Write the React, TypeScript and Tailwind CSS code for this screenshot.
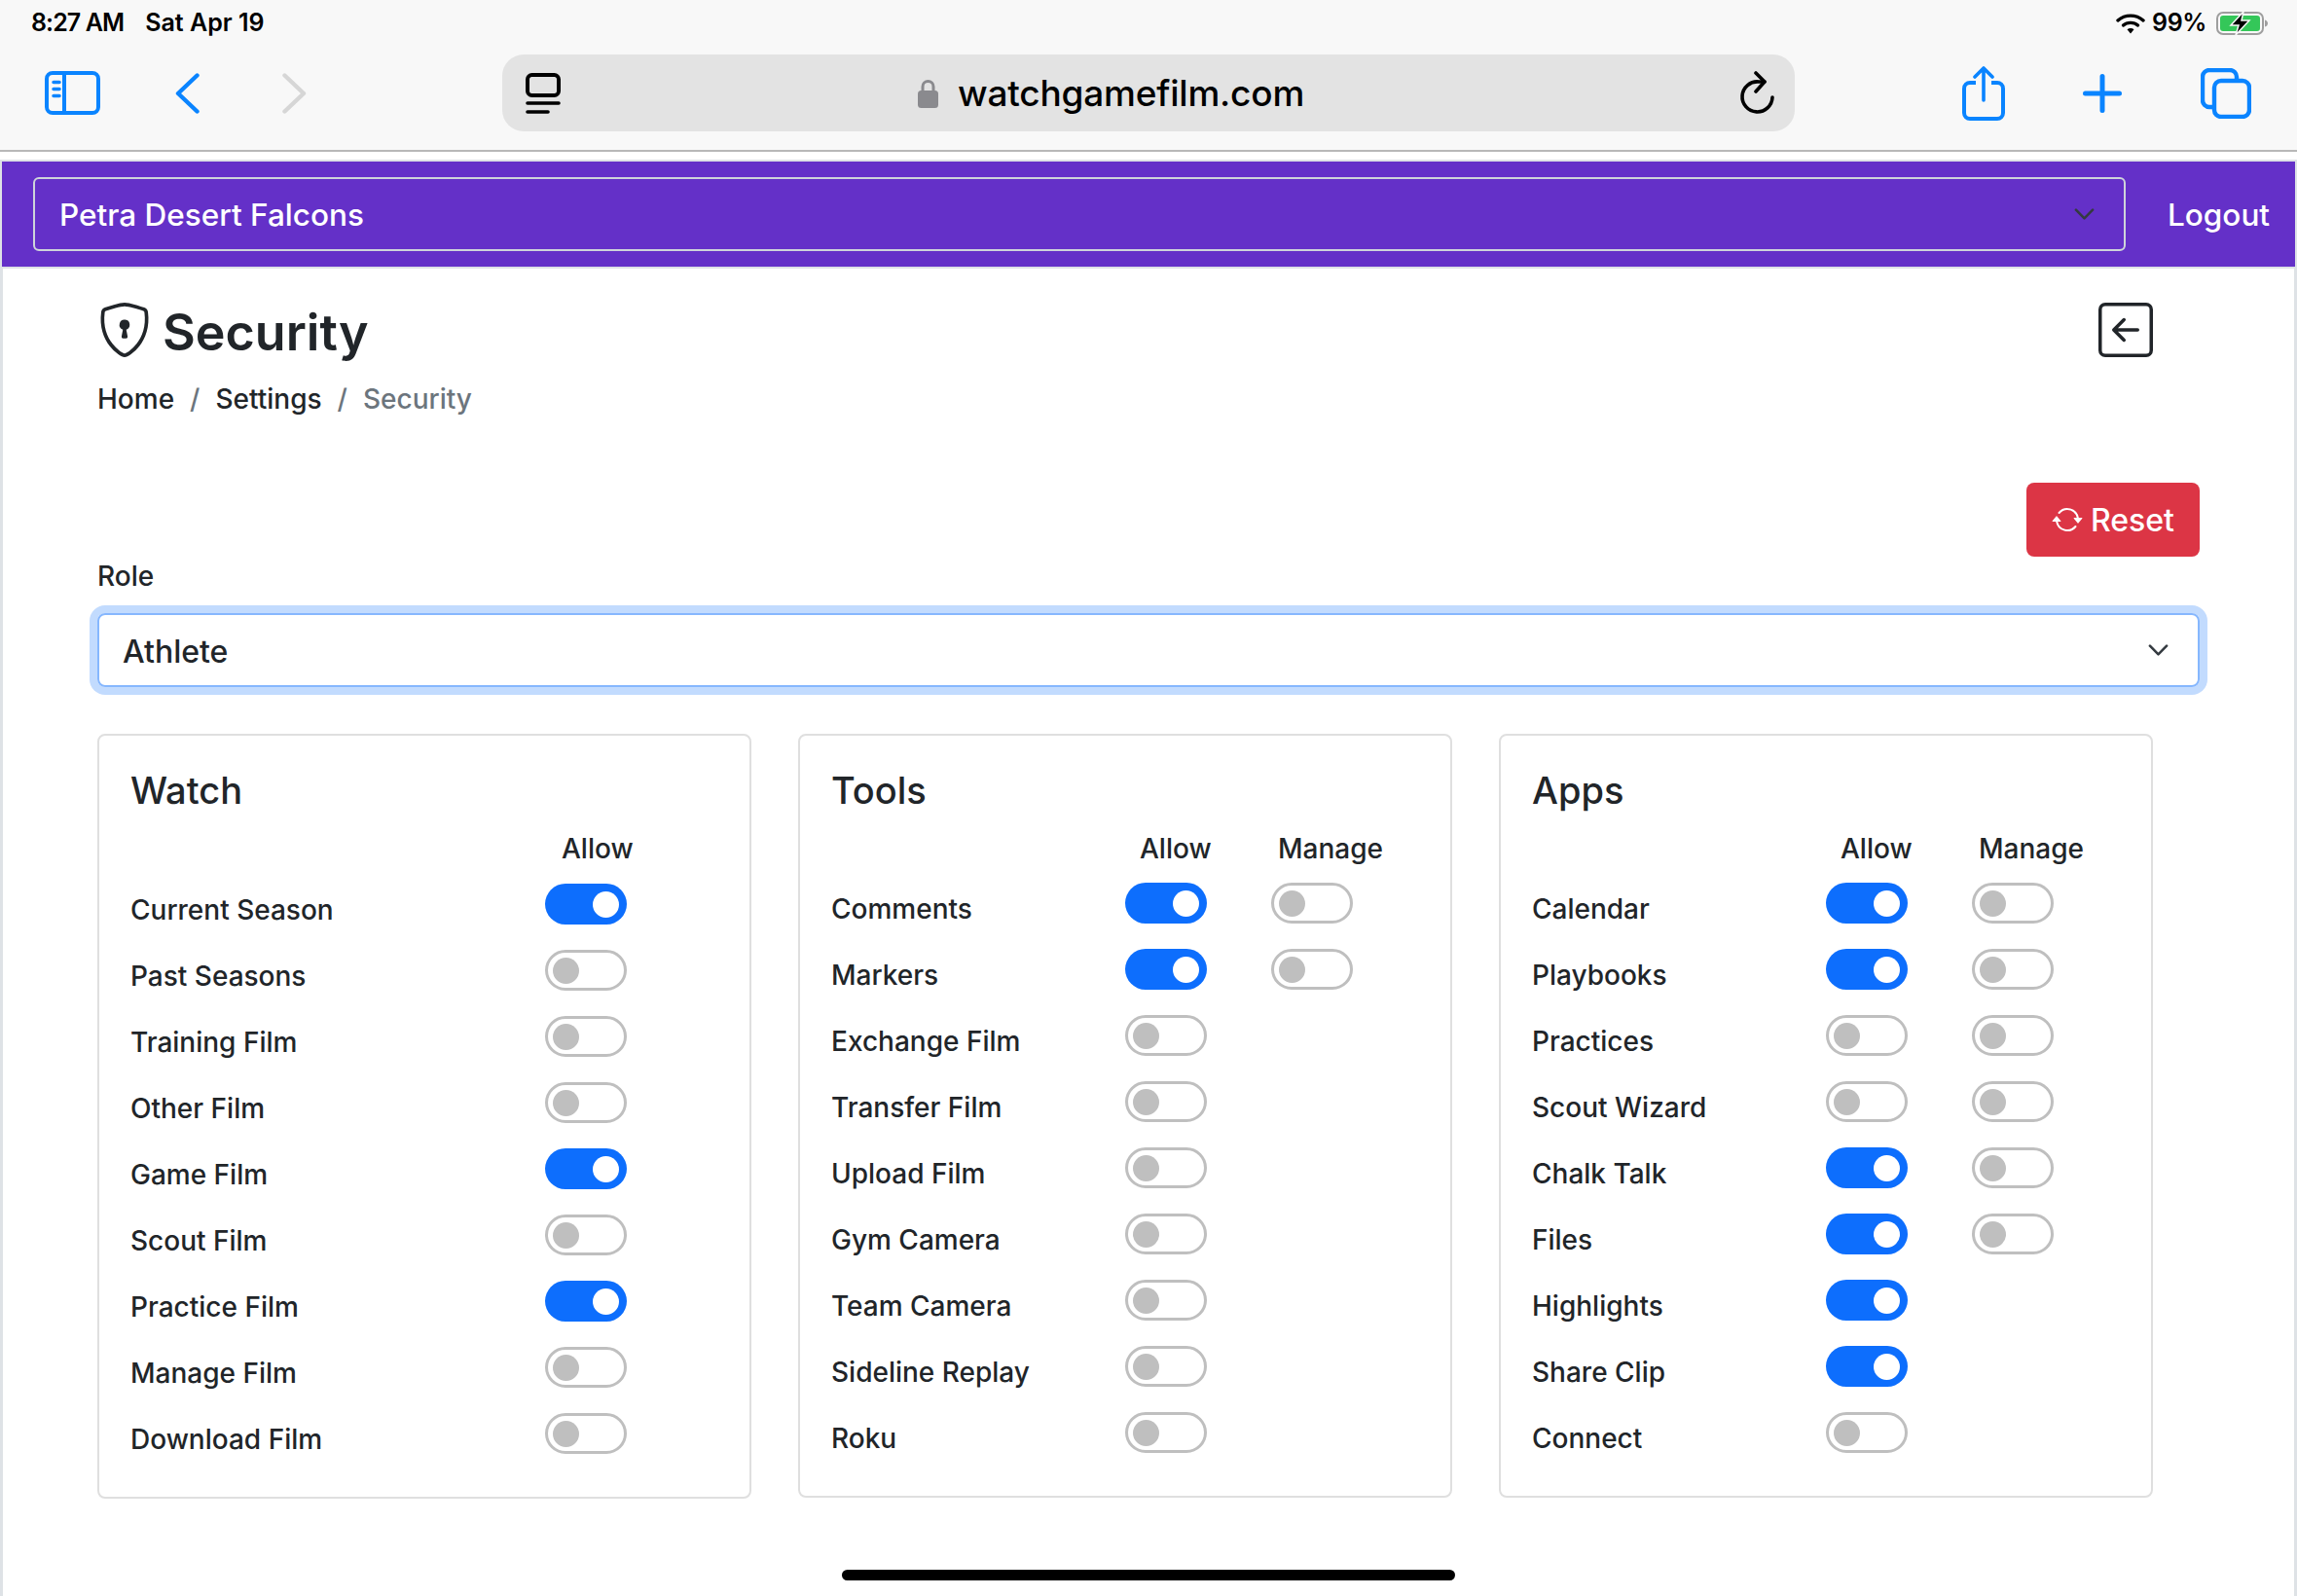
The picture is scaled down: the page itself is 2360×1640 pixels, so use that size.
import { BsArrowLeftSquare, BsArrowRepeat, BsShieldLock } from "react-icons/bs";

type Row = { label: string; allow: boolean; manage?: boolean };

const watch: Row[] = [
  { label: "Current Season", allow: true },
  { label: "Past Seasons", allow: false },
  { label: "Training Film", allow: false },
  { label: "Other Film", allow: false },
  { label: "Game Film", allow: true },
  { label: "Scout Film", allow: false },
  { label: "Practice Film", allow: true },
  { label: "Manage Film", allow: false },
  { label: "Download Film", allow: false },
];

const tools: Row[] = [
  { label: "Comments", allow: true, manage: false },
  { label: "Markers", allow: true, manage: false },
  { label: "Exchange Film", allow: false },
  { label: "Transfer Film", allow: false },
  { label: "Upload Film", allow: false },
  { label: "Gym Camera", allow: false },
  { label: "Team Camera", allow: false },
  { label: "Sideline Replay", allow: false },
  { label: "Roku", allow: false },
];

const apps: Row[] = [
  { label: "Calendar", allow: true, manage: false },
  { label: "Playbooks", allow: true, manage: false },
  { label: "Practices", allow: false, manage: false },
  { label: "Scout Wizard", allow: false, manage: false },
  { label: "Chalk Talk", allow: true, manage: false },
  { label: "Files", allow: true, manage: false },
  { label: "Highlights", allow: true },
  { label: "Share Clip", allow: true },
  { label: "Connect", allow: false },
];

function Toggle({ on }: { on: boolean }) {
  if (on) {
    return (
      <div className="flex h-[42px] w-[84px] items-center justify-end rounded-full bg-[#0d6efd] pr-[8px]">
        <div className="size-[27px] rounded-full bg-white" />
      </div>
    );
  }
  return (
    <div className="flex h-[42px] w-[84px] items-center rounded-full border-[3px] border-[#bfbfbf] bg-white pl-[5px]">
      <div className="size-[27px] rounded-full bg-[#bfbfbf]" />
    </div>
  );
}

function PermissionCard({
  title,
  rows,
  labelWidth,
  hasManage,
  rowsClass,
}: {
  title: string;
  rows: Row[];
  labelWidth: string;
  hasManage: boolean;
  rowsClass?: string;
}) {
  return (
    <div className="rounded-[8px] border-2 border-[#dfdfdf] pt-[32px] pb-[18px] pl-[32px]">
      <h3 className="text-[38px] leading-[48px] font-medium">{title}</h3>
      <div className="mt-[18px] flex h-[36px] text-[28px] leading-[36px] font-medium">
        <div className={labelWidth} />
        <div className={hasManage ? "w-[150px] pl-[15px]" : "w-[150px] pl-[17px]"}>Allow</div>
        {hasManage && <div className="pl-[7px]">Manage</div>}
      </div>
      <div className={`mt-[17px] ${rowsClass ?? ""}`}>
        {rows.map((r) => (
          <div key={r.label} className="flex h-[68px] items-start text-[28px] font-medium">
            <div className={`${labelWidth} pt-[9px] leading-[36px]`}>{r.label}</div>
            <div className="w-[150px]">
              <Toggle on={r.allow} />
            </div>
            {r.manage !== undefined && <Toggle on={r.manage} />}
          </div>
        ))}
      </div>
    </div>
  );
}

function SelectChevron({ className }: { className: string }) {
  return (
    <svg viewBox="0 0 24 14" fill="none" className={className}>
      <path d="M2 2l10 10L22 2" stroke="#343a40" strokeWidth="3" strokeLinecap="round" strokeLinejoin="round" />
    </svg>
  );
}

function BrowserChrome() {
  return (
    <div className="h-[156px] border-b-2 border-[#b8b8b8] bg-[#f8f8f8] text-black">
      <div className="flex h-[52px] items-center pb-[4px] pl-[32px] pr-[29px] text-[25px] font-semibold">
        <span className="tracking-[-0.9px]">8:27 AM</span>
        <span className="ml-[22px]">Sat Apr 19</span>
        <div className="ml-auto flex items-center">
          <svg viewBox="0 0 30 22" className="h-[22px] w-[30px]" fill="none">
            <path d="M2 8C9.5 1.5 20.5 1.5 28 8" stroke="#000" strokeWidth="3.4" strokeLinecap="round" />
            <path d="M7.5 13C11.5 9.5 18.5 9.5 22.5 13" stroke="#000" strokeWidth="3.4" strokeLinecap="round" />
            <path d="M11.5 17.2c2-1.6 5-1.6 7 0L15 21.5z" fill="#000" />
          </svg>
          <span className="ml-[7px] tracking-[-0.4px]">99%</span>
          <svg viewBox="0 0 54 26" className="ml-[10px] h-[26px] w-[54px]" fill="none">
            <rect x="1" y="2" width="47" height="22" rx="6" stroke="#9e9e9e" strokeWidth="2" />
            <rect x="4" y="5" width="41" height="16" rx="3" fill="#34c759" />
            <path d="M50 9.5c2 .6 3 2 3 3.5s-1 3-3 3.5z" fill="#9e9e9e" />
            <path d="M28 1L15 15h8l-3 10 14-15h-8z" fill="#000" stroke="#f8f8f8" strokeWidth="1.5" />
          </svg>
        </div>
      </div>
      <div className="flex h-[87px] items-center">
        <svg viewBox="0 0 57 45" className="ml-[46px] h-[45px] w-[57px]" fill="none">
          <rect x="2" y="2" width="53" height="41" rx="6" stroke="#0a84ff" strokeWidth="4" />
          <path d="M20 2v41" stroke="#0a84ff" strokeWidth="4" />
          <path d="M9 11.5h6M9 18.5h6M9 25.5h6" stroke="#0a84ff" strokeWidth="3.5" strokeLinecap="round" />
        </svg>
        <svg viewBox="0 0 25 42" className="ml-[77px] h-[42px] w-[25px]" fill="none">
          <path d="M22.5 2.5L3 21l19.5 18.5" stroke="#0a84ff" strokeWidth="4.4" strokeLinecap="round" strokeLinejoin="round" />
        </svg>
        <svg viewBox="0 0 25 42" className="ml-[85px] h-[42px] w-[25px]" fill="none">
          <path d="M2.5 2.5L22 21 2.5 39.5" stroke="#d6d6d6" strokeWidth="4.4" strokeLinecap="round" strokeLinejoin="round" />
        </svg>
        <div className="ml-[201px] flex h-[79px] w-[1328px] items-center rounded-[22px] bg-[#e3e3e3]">
          <svg viewBox="0 0 36 42" className="ml-[24px] h-[42px] w-[36px]" fill="none">
            <rect x="2" y="2" width="32" height="21" rx="4.5" stroke="#000" strokeWidth="4" />
            <path d="M2 31h32" stroke="#000" strokeWidth="3.6" strokeLinecap="round" />
            <path d="M2 40h21" stroke="#000" strokeWidth="3.6" strokeLinecap="round" />
          </svg>
          <svg viewBox="0 0 23 30" className="ml-[366px] h-[30px] w-[23px]" fill="none">
            <path d="M6 14V8a5.5 5.5 0 0 1 11 0v6" stroke="#8a8a8e" strokeWidth="3" />
            <rect x="1" y="12" width="21" height="18" rx="3.5" fill="#8a8a8e" />
          </svg>
          <span className="ml-[19px] text-[37px] font-medium tracking-[-0.2px]">watchgamefilm.com</span>
          <svg viewBox="0 0 38 46" className="ml-auto mr-[20px] h-[46px] w-[38px]" fill="none">
            <path d="M27 11h-6A15.5 15.5 0 1 0 35 27" stroke="#000" strokeWidth="3.6" strokeLinecap="round" />
            <path d="M18 2l9 9-9 10" stroke="#000" strokeWidth="3.6" strokeLinecap="round" strokeLinejoin="round" />
          </svg>
        </div>
        <svg viewBox="0 0 44 56" className="ml-[172px] h-[56px] w-[44px]" fill="none">
          <path d="M14 17H8a6 6 0 0 0-6 6v25a6 6 0 0 0 6 6h28a6 6 0 0 0 6-6V23a6 6 0 0 0-6-6h-6" stroke="#0a84ff" strokeWidth="4" />
          <path d="M22 3v32M13 11l9-9 9 9" stroke="#0a84ff" strokeWidth="3.6" strokeLinecap="round" strokeLinejoin="round" />
        </svg>
        <svg viewBox="0 0 40 40" className="ml-[80px] h-[40px] w-[40px]" fill="none">
          <path d="M20 2.5v35M2.5 20h35" stroke="#0a84ff" strokeWidth="5" strokeLinecap="round" />
        </svg>
        <svg viewBox="0 0 52 52" className="ml-[81px] h-[52px] w-[52px]" fill="none">
          <path d="M12 40H9a7 7 0 0 1-7-7V9a7 7 0 0 1 7-7h21a7 7 0 0 1 7 7v3" stroke="#0a84ff" strokeWidth="4.4" strokeLinecap="round" />
          <rect x="14" y="13" width="36" height="37" rx="7" stroke="#0a84ff" strokeWidth="4.4" />
        </svg>
      </div>
    </div>
  );
}

export default function App() {
  return (
    <div className="h-[1640px] w-[2360px] overflow-hidden bg-white font-['Inter',sans-serif] text-[#212529]">
      <BrowserChrome />
      <div className="mt-[8px] h-[1476px] border-x-[3px] border-t-2 border-[#dee2e6]">
        <nav className="-mx-px flex h-[110px] items-center border-b-2 border-[#dee2e6] bg-[#6430c8] text-[31.5px] font-medium text-white">
          <div className="ml-[32px] flex h-[76px] w-[2150px] items-center justify-between rounded-[6px] border-2 border-[#ced4da] pl-[25px] pr-[30px]">
            <span className="pt-[2px]">Petra Desert Falcons</span>
            <SelectChevron className="h-[12px] w-[21px]" />
          </div>
          <span className="ml-[43px] pt-[2px]">Logout</span>
        </nav>

        <main className="ml-[97px] w-[2160px]">
          <div className="mt-[35px] flex h-[56px] w-[2112px] items-center justify-between">
            <div className="flex items-center">
              <BsShieldLock className="size-[56px]" />
              <h1 className="ml-[11px] mt-[6px] text-[52px] leading-[56px] font-semibold">Security</h1>
            </div>
            <BsArrowLeftSquare className="size-[56px]" />
          </div>

          <div className="mt-[25px] flex text-[28px] leading-[36px] font-medium">
            <span>Home</span>
            <span className="mx-[16px] text-[#6c757d]">/</span>
            <span>Settings</span>
            <span className="mx-[16px] text-[#6c757d]">/</span>
            <span className="text-[#6c757d]">Security</span>
          </div>

          <div className="mt-[68px] flex justify-end">
            <button className="flex h-[76px] w-[178px] items-center justify-center gap-[8px] rounded-[8px] bg-[#dc3545] text-[32px] font-medium text-white">
              <BsArrowRepeat className="size-[32px]" />
              <span className="pt-[2px]">Reset</span>
            </button>
          </div>

          <div className="mt-[2px] text-[28px] leading-[36px] font-medium">Role</div>
          <div className="mt-[20px] flex h-[76px] items-center justify-between rounded-[8px] border-2 border-[#86b7fe] pl-[24px] pr-[30px] text-[32px] font-medium shadow-[0_0_0_8px_#c2dbfe]">
            <span className="pt-[3px]">Athlete</span>
            <SelectChevron className="h-[12px] w-[21px]" />
          </div>

          <div className="mt-[48px] grid w-[2112px] grid-cols-3 items-start gap-[48px]">
            <PermissionCard title="Watch" rows={watch} labelWidth="w-[426px]" hasManage={false} rowsClass="pt-px" />
            <PermissionCard title="Tools" rows={tools} labelWidth="w-[302px]" hasManage />
            <PermissionCard title="Apps" rows={apps} labelWidth="w-[302px]" hasManage />
          </div>

          <div className="mt-[73px] -ml-[97px] flex w-[2354px] justify-center">
            <div className="h-[11px] w-[630px] rounded-full bg-black" />
          </div>
        </main>
      </div>
    </div>
  );
}
